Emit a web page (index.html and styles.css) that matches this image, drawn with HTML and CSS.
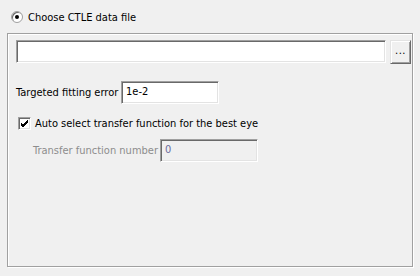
FILE: index.html
```html
<!DOCTYPE html>
<html>
<head>
<meta charset="utf-8">
<link rel="stylesheet" href="styles.css">
</head>
<body>
<div class="radio-row">
  <span class="radio"><span class="dot"></span></span>
  <span class="label">Choose CTLE data file</span>
</div>
<div class="group">
  <div class="file-row">
    <div class="field file-field"></div>
    <div class="button">...</div>
  </div>
  <div class="err-row">
    <span class="label">Targeted fitting error</span>
    <div class="field err-field">1e-2</div>
  </div>
  <div class="check-row">
    <span class="checkbox"><svg width="9" height="9" viewBox="0 0 9 9"><path d="M1 4 L3 6 L8 1 M1 5 L3 7 L8 2 M1 6 L3 8 L8 3" stroke="#000" stroke-width="1" fill="none" shape-rendering="crispEdges"/></svg></span>
    <span class="label">Auto select transfer function for the best eye</span>
  </div>
  <div class="num-row">
    <span class="label disabled">Transfer function number</span>
    <div class="field num-field">0</div>
  </div>
</div>
</body>
</html>
```
FILE: styles.css
```css
html, body {
  margin: 0;
  padding: 0;
  background: #f0f0f0;
  width: 420px;
  height: 276px;
  overflow: hidden;
  font-family: "DejaVu Sans Condensed", "DejaVu Sans", sans-serif;
  font-size: 11px;
  color: #000;
}
.radio-row {
  display: flex;
  align-items: center;
  height: 14px;
  margin-top: 10px;
  padding-left: 11px;
}
.radio {
  width: 12px;
  height: 12px;
  box-sizing: border-box;
  border-radius: 50%;
  border: 1px solid #a0a0a0;
  background: #fff;
  box-shadow: inset 1px 1px 0 #696969;
  display: flex;
  align-items: center;
  justify-content: center;
}
.dot {
  width: 4px;
  height: 4px;
  border-radius: 50%;
  background: #000;
}
.radio-row .label {
  margin-left: 5px;
}
.group {
  margin-top: 9px;
  margin-left: 7px;
  width: 406px;
  height: 234px;
  box-sizing: border-box;
  border: 1px solid #a0a0a0;
  box-shadow: inset 1px 1px 0 #fff, 1px 1px 0 #fff;
  padding: 6px 1px 0 8px;
}
.field {
  box-sizing: border-box;
  background: #fff;
  border-top: 1px solid #a0a0a0;
  border-left: 1px solid #a0a0a0;
  border-right: 1px solid #fff;
  border-bottom: 1px solid #fff;
  box-shadow: inset 1px 1px 0 #696969, inset -1px -1px 0 #e3e3e3;
  padding: 3px 4px 0 4px;
}
.file-row {
  display: flex;
  gap: 4px;
}
.file-field {
  width: 371px;
  height: 23px;
}
.button {
  width: 21px;
  height: 24px;
  box-sizing: border-box;
  background: #f0f0f0;
  border-top: 1px solid #e3e3e3;
  border-left: 1px solid #e3e3e3;
  border-right: 1px solid #696969;
  border-bottom: 1px solid #696969;
  box-shadow: inset 1px 1px 0 #fff, inset -1px -1px 0 #a0a0a0;
  text-align: center;
  line-height: 20px;
  letter-spacing: 0.5px;
}
.err-row {
  display: flex;
  align-items: center;
  margin-top: 17px;
  height: 23px;
}
.err-row .label {
  width: 105px;
}
.err-field {
  width: 98px;
  height: 23px;
}
.check-row {
  display: flex;
  align-items: center;
  margin-top: 13px;
  padding-left: 2px;
  height: 13px;
}
.checkbox {
  width: 13px;
  height: 13px;
  box-sizing: border-box;
  background: #fff;
  border-top: 1px solid #a0a0a0;
  border-left: 1px solid #a0a0a0;
  border-right: 1px solid #fff;
  border-bottom: 1px solid #fff;
  box-shadow: inset 1px 1px 0 #696969, inset -1px -1px 0 #e3e3e3;
  display: flex;
  align-items: center;
  justify-content: center;
}
.check-row .label {
  margin-left: 4px;
}
.num-row {
  display: flex;
  align-items: center;
  margin-top: 9px;
  padding-left: 17px;
  height: 23px;
}
.num-row .label {
  width: 127px;
}
.disabled {
  color: #8d8d8d;
}
.num-field {
  width: 98px;
  height: 23px;
  background: #f0f0f0;
  color: #6d6d9d;
}
```
